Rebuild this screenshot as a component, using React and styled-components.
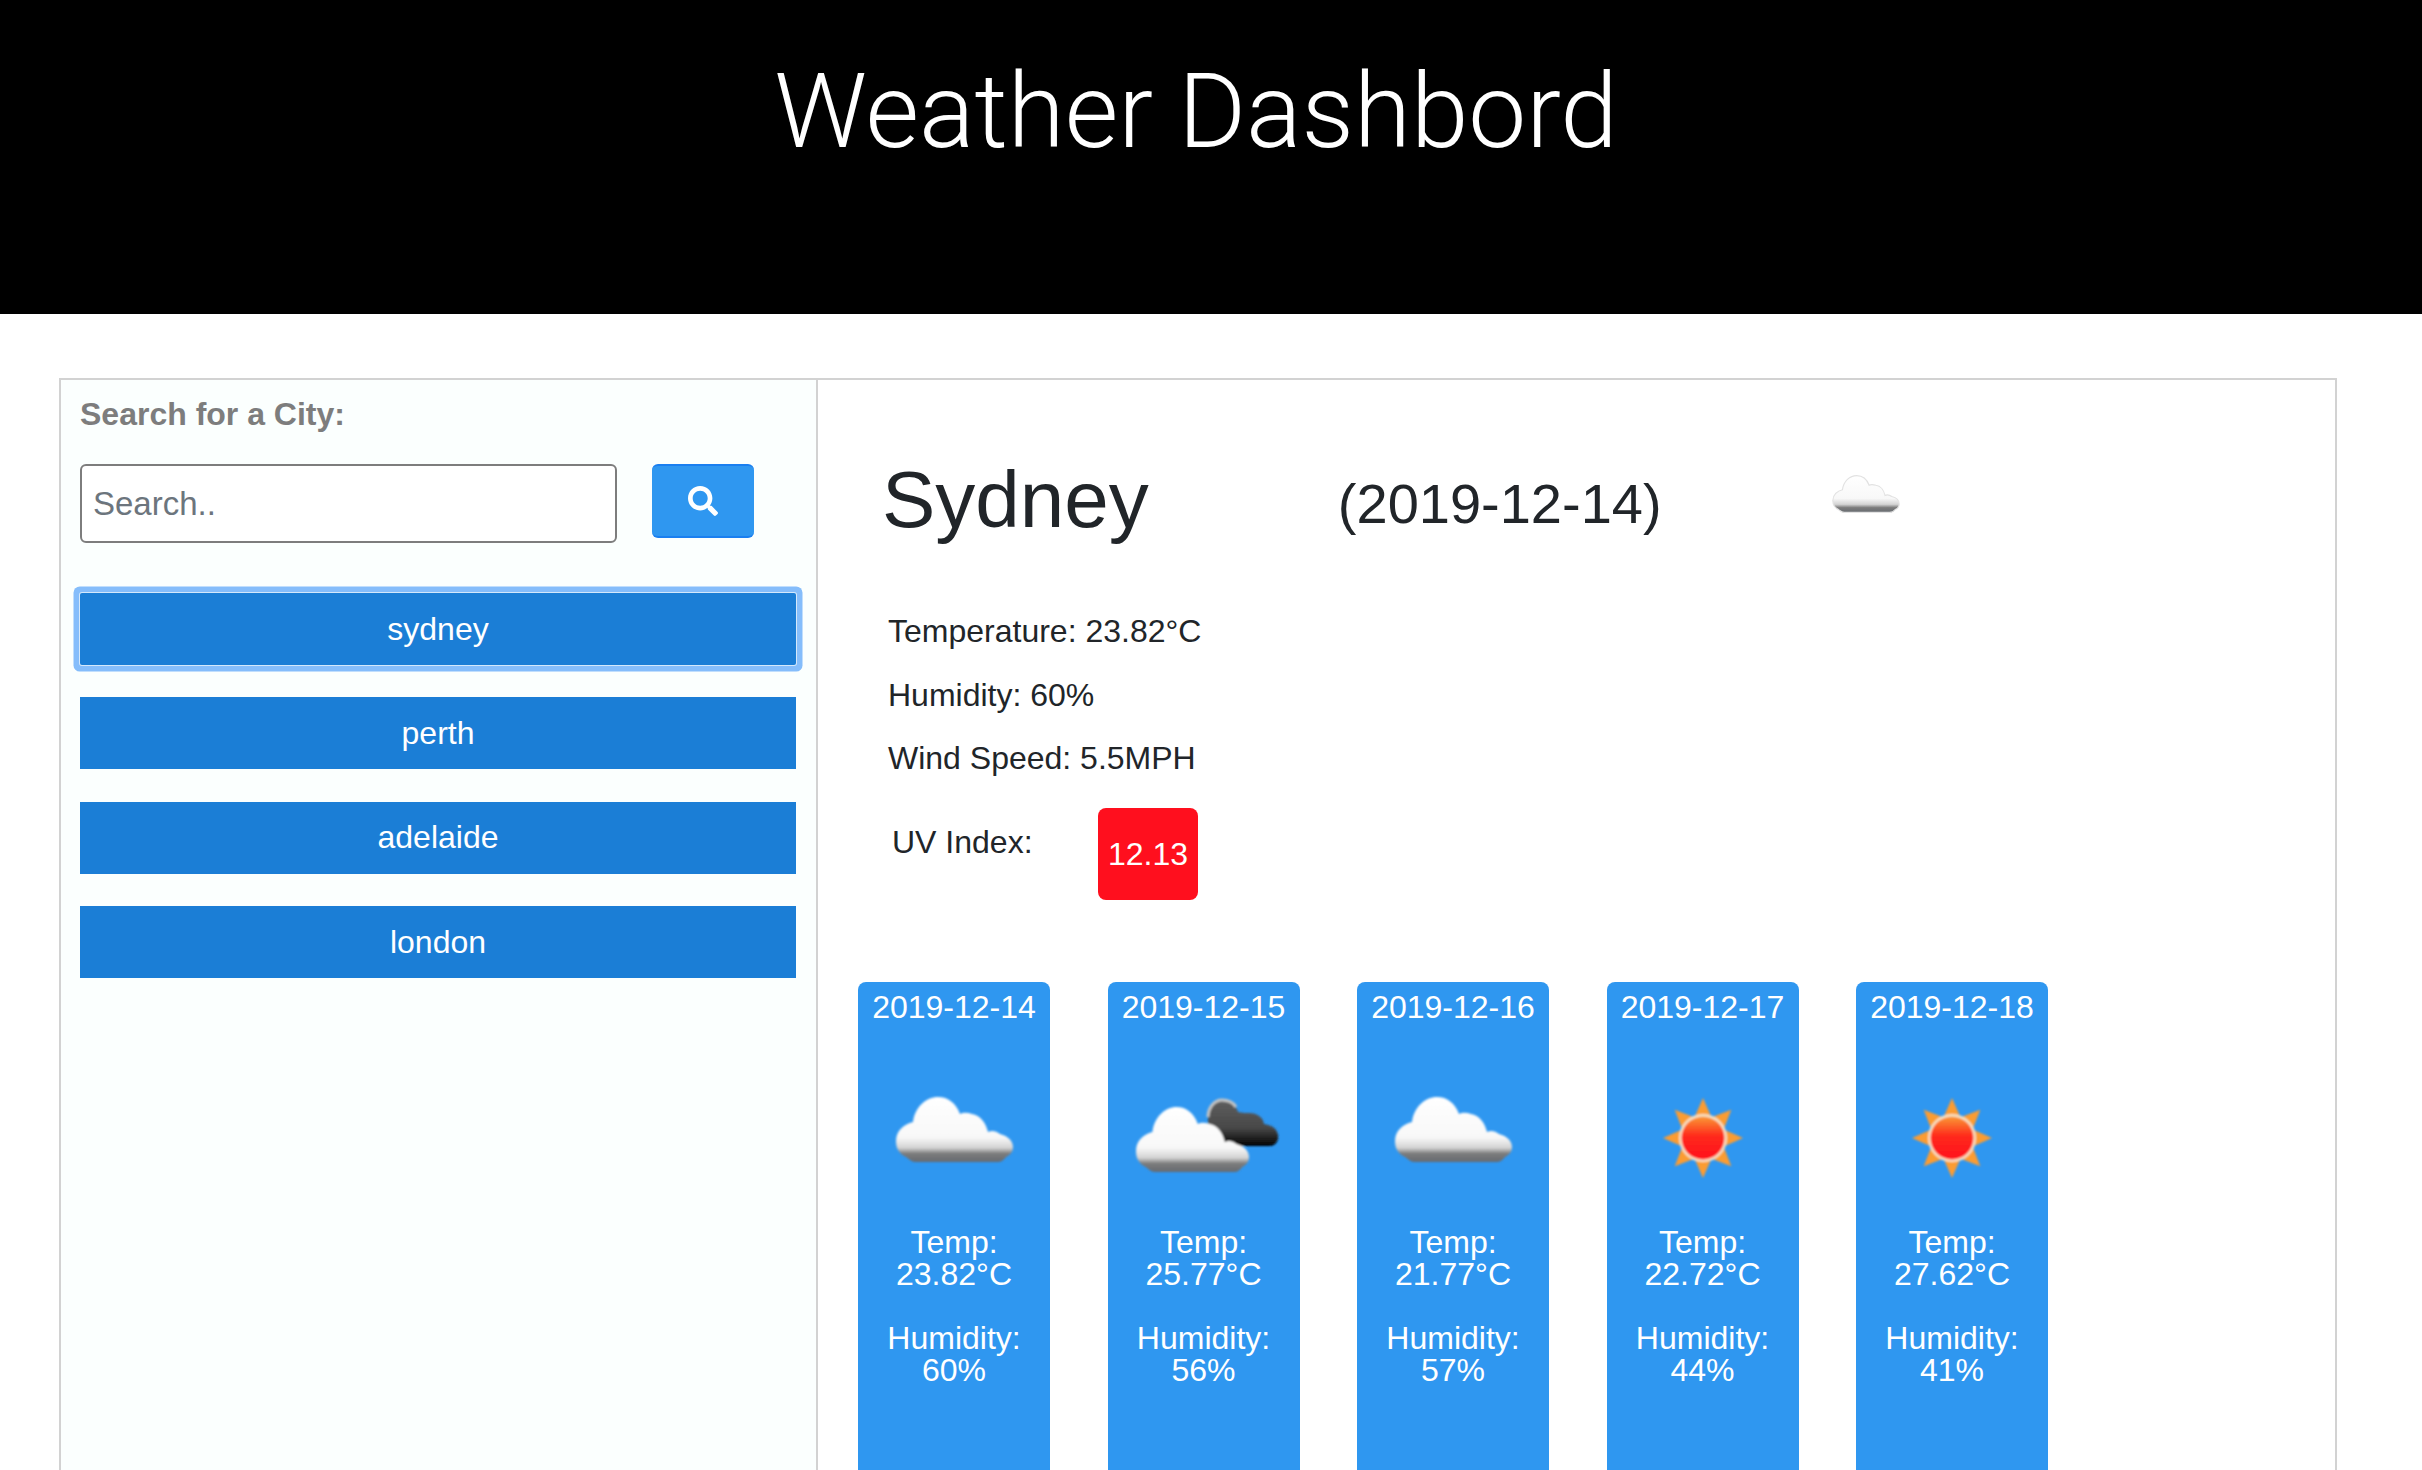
import React, { useId } from "react";
import styled, { createGlobalStyle } from "styled-components";
import { FaSearch } from "react-icons/fa";

const GlobalStyle = createGlobalStyle`
  html, body {
    margin: 0;
    height: 1470px;
    overflow: hidden;
    background: #fff;
    font-family: "Liberation Sans", Arial, sans-serif;
  }
  * { box-sizing: border-box; }
`;

const Header = styled.header`
  height: 314px;
  background: #000;
  padding: 52px 30px 0 0;
  text-align: center;
`;

const Title = styled.h1`
  margin: 0;
  font-family: Roboto, "Liberation Sans", sans-serif;
  font-weight: 300;
  font-size: 103.5px;
  line-height: 120px;
  color: #fff;
`;

const Dashboard = styled.main`
  width: 2278px;
  height: 1200px;
  margin: 64px 0 0 59px;
  border: 2px solid #d2d2d2;
  display: grid;
  grid-template-columns: 757px 1fr;
`;

const Sidebar = styled.aside`
  background: #fbfffe;
  border-right: 2px solid #d2d2d2;
  padding: 10px 19px 0;
`;

const SearchLabel = styled.label`
  display: block;
  font-size: 32px;
  line-height: 48px;
  font-weight: 700;
  color: #7d7d7d;
`;

const SearchRow = styled.div`
  display: flex;
  align-items: flex-start;
  gap: 35px;
  margin-top: 26px;
`;

const SearchInput = styled.input`
  width: 537px;
  height: 79px;
  padding: 0 11px;
  background: #fff;
  border: 2px solid #7d7d7d;
  border-radius: 6px;
  font-family: inherit;
  font-size: 33px;
  color: #495057;
  &::placeholder {
    color: #6c757d;
    opacity: 1;
  }
`;

const SearchButton = styled.button`
  width: 102px;
  height: 74px;
  display: flex;
  align-items: center;
  justify-content: center;
  background: #2f97f0;
  border: 0;
  border-top: 2px solid #1a7ff0;
  border-bottom: 2px solid #1a7ff0;
  border-radius: 6px;
  color: #fff;
  font-size: 30px;
`;

const CityList = styled.div`
  display: flex;
  flex-direction: column;
  gap: 32.4px;
  margin-top: 50px;
`;

const CityButton = styled.button`
  width: 716px;
  height: 72px;
  background: #1b7ed6;
  border: 0;
  color: #fff;
  font-family: inherit;
  font-size: 32px;
  box-shadow: ${({ $active }) =>
    $active ? "0 0 0 1px #d4e8fb, 0 0 0 6.5px #85bdfb" : "none"};
  border-radius: ${({ $active }) => ($active ? "2px" : "0")};
`;

const Panel = styled.section`
  padding: 76px 0 0 40px;
  color: #212529;
`;

const Heading = styled.div`
  display: flex;
  align-items: flex-start;
  margin-left: 24px;
`;

const CityName = styled.h2`
  margin: 0;
  font-size: 80px;
  line-height: 88px;
  font-weight: 400;
`;

const CityDate = styled.span`
  margin: 4px 0 0 189px;
  font-size: 56px;
  line-height: 88px;
`;

const HeadingIcon = styled.div`
  margin: 19px 0 0 170px;
  line-height: 0;
`;

const Details = styled.div`
  display: flex;
  flex-direction: column;
  gap: 15.5px;
  margin: 59px 0 0 30px;
`;

const Detail = styled.p`
  margin: 0;
  font-size: 32px;
  line-height: 48px;
  color: #212529;
`;

const UvRow = styled.div`
  display: flex;
  align-items: flex-start;
  margin: 26px 0 0 34px;
`;

const UvLabel = styled.span`
  width: 206px;
  margin-top: 10px;
  font-size: 32px;
  line-height: 48px;
`;

const UvBadge = styled.span`
  width: 100px;
  height: 92px;
  display: flex;
  align-items: center;
  justify-content: center;
  background: #ff0f1e;
  border-radius: 8px;
  color: #fff;
  font-size: 32px;
`;

const Forecast = styled.div`
  display: flex;
  gap: 57.5px;
  margin-top: 82px;
`;

const Card = styled.article`
  width: 192px;
  height: 620px;
  padding-top: 9px;
  background: #2f97f0;
  border-radius: 8px 8px 0 0;
  color: #fff;
  text-align: center;
  font-size: 32px;
  line-height: 32px;
`;

const CardIcon = styled.div`
  height: 160px;
  margin: 30px 0 13px;
  display: flex;
  justify-content: center;
`;

const CardStat = styled.div`
  margin-bottom: 32px;
`;

const CLOUD_PATH =
  "M10 60C2 56 0 50 0 44C0 34 8 27 17 25C19 10 30 0 42 0C52 0 60 6 64 17C68 15 72 16 76 17C84 18 90 26 92 35C96 33 100 34 104 37C112 39 117 44 117 50C117 55 114 58 110 60C106 65 104 65 100 65L20 65C16 65 14 63 10 60Z";

const DARK_CLOUD_PATH =
  "M90 93L145 93C152 93 155 87 154 82C153 76 148 72 140 71C139 64 133 60 125 60C122 60 118 60 114 59C112 52 106 48 98 48C90 48 84 55 84 64L84 93Z";

const CloudShape = ({ id, transform, stroke }) => (
  <g transform={transform}>
    <defs>
      <linearGradient id={id} x1="0" y1="0" x2="0" y2="65" gradientUnits="userSpaceOnUse">
        <stop offset="0" stopColor="#ffffff" />
        <stop offset="0.62" stopColor="#f8f8f8" />
        <stop offset="0.78" stopColor="#d4d4d4" />
        <stop offset="0.87" stopColor="#7c7c7c" />
        <stop offset="1" stopColor="#666a70" />
      </linearGradient>
    </defs>
    <path d={CLOUD_PATH} fill={`url(#${id})`} stroke={stroke} strokeWidth={stroke ? 2 : 0} />
  </g>
);

const SmallCloud = () => {
  const id = useId();
  return (
    <svg width="68" height="38" viewBox="-1 -1 119 67">
      <CloudShape id={id} stroke="#e2e2e2" />
    </svg>
  );
};

const CloudIcon = () => {
  const id = useId();
  const blur = `${id}b`;
  return (
    <svg width="160" height="160" viewBox="0 0 160 160">
      <defs>
        <filter id={blur}>
          <feGaussianBlur stdDeviation="0.9" />
        </filter>
      </defs>
      <g filter={`url(#${blur})`}>
        <CloudShape id={id} transform="translate(22 44)" />
      </g>
    </svg>
  );
};

const PartlyCloudyIcon = () => {
  const id = useId();
  const dark = `${id}d`;
  const blur = `${id}b`;
  return (
    <svg width="160" height="160" viewBox="0 0 160 160">
      <defs>
        <filter id={blur}>
          <feGaussianBlur stdDeviation="0.9" />
        </filter>
        <linearGradient id={dark} x1="0" y1="48" x2="0" y2="93" gradientUnits="userSpaceOnUse">
          <stop offset="0" stopColor="#5e5e5e" />
          <stop offset="0.6" stopColor="#484848" />
          <stop offset="0.85" stopColor="#1c1c1c" />
          <stop offset="1" stopColor="#000" />
        </linearGradient>
      </defs>
      <g filter={`url(#${blur})`}>
        <path d={DARK_CLOUD_PATH} fill={`url(#${dark})`} />
        <path d="M84 64C84 55 90 47 98 47C104 47 109 49 112 54" fill="none" stroke="#c4c4c4" strokeWidth="3" />
        <CloudShape id={id} transform="translate(12 54) scale(0.966 1)" />
      </g>
    </svg>
  );
};

const SunIcon = () => {
  const id = useId();
  const blur = `${id}b`;
  const rays = [0, 45, 90, 135, 180, 225, 270, 315];
  return (
    <svg width="160" height="160" viewBox="0 0 160 160">
      <defs>
        <filter id={blur}>
          <feGaussianBlur stdDeviation="0.8" />
        </filter>
        <linearGradient id={id} x1="0" y1="0" x2="0" y2="1">
          <stop offset="0" stopColor="#fa9a35" />
          <stop offset="0.45" stopColor="#ff2a1c" />
          <stop offset="1" stopColor="#ff101c" />
        </linearGradient>
      </defs>
      <g filter={`url(#${blur})`}>
        {rays.map((angle) => (
          <polygon
            key={angle}
            points="69,70 80,45 91,70"
            fill="#fb9c33"
            transform={`rotate(${angle} 80 85)`}
          />
        ))}
        <circle cx="80" cy="85" r="24" fill="#f7e3c6" />
        <circle cx="80" cy="85" r="21.5" fill={`url(#${id})`} />
      </g>
    </svg>
  );
};

const cities = ["sydney", "perth", "adelaide", "london"];

const days = [
  { date: "2019-12-14", temp: "23.82°C", humidity: "60%", Icon: CloudIcon },
  { date: "2019-12-15", temp: "25.77°C", humidity: "56%", Icon: PartlyCloudyIcon },
  { date: "2019-12-16", temp: "21.77°C", humidity: "57%", Icon: CloudIcon },
  { date: "2019-12-17", temp: "22.72°C", humidity: "44%", Icon: SunIcon },
  { date: "2019-12-18", temp: "27.62°C", humidity: "41%", Icon: SunIcon },
];

const App = () => {
  return (
    <>
      <GlobalStyle />
      <Header>
        <Title>Weather Dashbord</Title>
      </Header>
      <Dashboard>
        <Sidebar>
          <SearchLabel htmlFor="city">Search for a City:</SearchLabel>
          <SearchRow>
            <SearchInput id="city" placeholder="Search.." />
            <SearchButton aria-label="Search">
              <FaSearch />
            </SearchButton>
          </SearchRow>
          <CityList>
            {cities.map((city, i) => (
              <CityButton key={city} $active={i === 0}>
                {city}
              </CityButton>
            ))}
          </CityList>
        </Sidebar>
        <Panel>
          <Heading>
            <CityName>Sydney</CityName>
            <CityDate>(2019-12-14)</CityDate>
            <HeadingIcon>
              <SmallCloud />
            </HeadingIcon>
          </Heading>
          <Details>
            <Detail>Temperature: 23.82°C</Detail>
            <Detail>Humidity: 60%</Detail>
            <Detail>Wind Speed: 5.5MPH</Detail>
          </Details>
          <UvRow>
            <UvLabel>UV Index:</UvLabel>
            <UvBadge>12.13</UvBadge>
          </UvRow>
          <Forecast>
            {days.map(({ date, temp, humidity, Icon }) => (
              <Card key={date}>
                <div>{date}</div>
                <CardIcon>
                  <Icon />
                </CardIcon>
                <CardStat>
                  Temp:
                  <br />
                  {temp}
                </CardStat>
                <CardStat>
                  Humidity:
                  <br />
                  {humidity}
                </CardStat>
              </Card>
            ))}
          </Forecast>
        </Panel>
      </Dashboard>
    </>
  );
};

export default App;
